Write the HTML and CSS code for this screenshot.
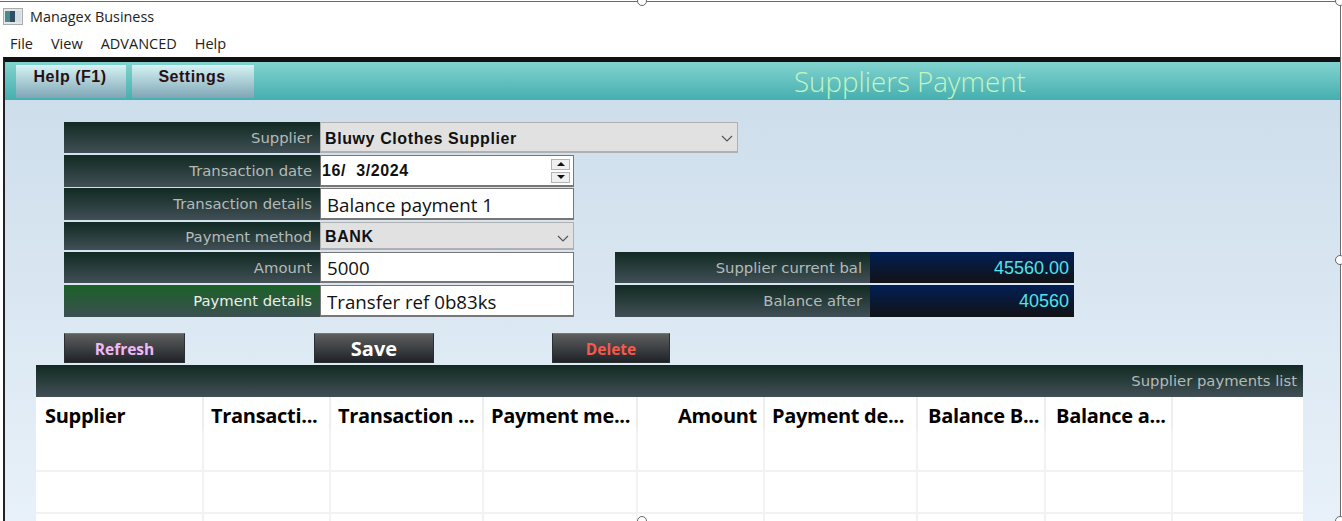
FILE: index.html
```html
<!DOCTYPE html>
<html lang="en">
<head>
    <meta charset="UTF-8">
    <meta name="viewport" content="width=device-width, initial-scale=1.0">
    <title>Managex Business</title>
    <link rel="stylesheet" href="styles.css">
</head>
<body>
    <div class="frame">
        <div class="titlebar">
            <svg class="app-icon" width="20" height="17" viewBox="0 0 20 17">
                <rect x="0.5" y="0.5" width="19" height="16" fill="#e4e6e8" stroke="#a9acae"/>
                <rect x="2" y="3" width="5" height="11" fill="#4a8a8c"/>
                <rect x="7" y="3" width="5" height="11" fill="#2f4f66"/>
                <rect x="12" y="3" width="6" height="11" fill="#d5dde3"/>
            </svg>
            <span>Managex Business</span>
        </div>
        <nav class="menubar">
            <span>File</span>
            <span>View</span>
            <span>ADVANCED</span>
            <span>Help</span>
        </nav>
        <div class="window">
            <header class="topbar">
                <div class="topbar-btns">
                    <button class="top-btn" type="button">Help (F1)</button>
                    <button class="top-btn" type="button">Settings</button>
                </div>
                <h1>Suppliers Payment</h1>
            </header>
            <main class="content">
                <div class="form-area">
                    <form class="form">
                        <div class="row row-h31">
                            <label class="lbl">Supplier</label>
                            <div class="select-wrap wide">
                                <select class="select"><option>Bluwy Clothes Supplier</option></select>
                                <svg class="chev" width="12" height="7" viewBox="0 0 12 7"><path d="M1 1l5 5 5-5" fill="none" stroke="#555" stroke-width="1.2"/></svg>
                            </div>
                        </div>
                        <div class="row row-h32">
                            <label class="lbl">Transaction date</label>
                            <div class="date-box">
                                <span class="date-val">16/ &nbsp;3/2024</span>
                                <div class="spin">
                                    <span class="spin-btn"><i class="arr-up"></i></span>
                                    <span class="spin-btn"><i class="arr-down"></i></span>
                                </div>
                            </div>
                        </div>
                        <div class="row row-h32 row-tight">
                            <label class="lbl">Transaction details</label>
                            <input class="field" type="text" value="Balance payment 1">
                        </div>
                        <div class="row row-h28">
                            <label class="lbl">Payment method</label>
                            <div class="select-wrap">
                                <select class="select"><option>BANK</option></select>
                                <svg class="chev" width="12" height="7" viewBox="0 0 12 7"><path d="M1 1l5 5 5-5" fill="none" stroke="#555" stroke-width="1.2"/></svg>
                            </div>
                        </div>
                        <div class="row row-h31">
                            <label class="lbl">Amount</label>
                            <input class="field" type="text" value="5000">
                        </div>
                        <div class="row row-h32">
                            <label class="lbl lbl-active">Payment details</label>
                            <input class="field" type="text" value="Transfer ref 0b83ks">
                        </div>
                    </form>
                    <div class="balances">
                        <div class="row row-h31">
                            <label class="lbl">Supplier current bal</label>
                            <output class="val">45560.00</output>
                        </div>
                        <div class="row row-h32">
                            <label class="lbl">Balance after</label>
                            <output class="val">40560</output>
                        </div>
                    </div>
                </div>
                <div class="actions">
                    <button class="act act-refresh" type="button">Refresh</button>
                    <button class="act act-save" type="button">Save</button>
                    <button class="act act-delete" type="button">Delete</button>
                </div>
                <section class="list">
                    <div class="list-title">Supplier payments list</div>
                    <table class="grid">
                        <thead>
                            <tr>
                                <th>Supplier</th>
                                <th>Transacti...</th>
                                <th>Transaction ...</th>
                                <th>Payment me...</th>
                                <th class="num">Amount</th>
                                <th>Payment de...</th>
                                <th class="pad-b">Balance B...</th>
                                <th class="pad-b">Balance a...</th>
                                <th></th>
                            </tr>
                        </thead>
                        <tbody>
                            <tr><td></td><td></td><td></td><td></td><td></td><td></td><td></td><td></td><td></td></tr>
                            <tr><td></td><td></td><td></td><td></td><td></td><td></td><td></td><td></td><td></td></tr>
                            <tr><td></td><td></td><td></td><td></td><td></td><td></td><td></td><td></td><td></td></tr>
                        </tbody>
                    </table>
                </section>
            </main>
        </div>
        <span class="handle h-top"></span>
        <span class="handle h-corner"></span>
        <span class="handle h-right"></span>
        <span class="handle h-bottom"></span>
        <span class="handle h-corner2"></span>
    </div>
</body>
</html>
```

FILE: styles.css
```css
html, body {
    margin: 0;
    height: 521px;
    overflow: hidden;
    background: #fff;
}
.frame {
    position: relative;
    width: 1341px;
    height: 520px;
    box-sizing: border-box;
    border-top: 1px solid #6a6a6a;
    margin-top: 1px;
    border-right: 1px solid #6a6a6a;
    display: flex;
    flex-direction: column;
    font-family: "Open Sans", sans-serif;
}
.titlebar {
    height: 29px;
    flex: none;
    display: flex;
    align-items: center;
    gap: 7px;
    padding: 0 0 1px 3px;
    box-sizing: border-box;
    font-size: 14.4px;
    color: #222;
}
.menubar {
    height: 26px;
    flex: none;
    box-sizing: border-box;
    display: flex;
    align-items: center;
    gap: 18px;
    padding: 0 0 2px 10px;
    font-size: 14.5px;
    color: #222;
}
.window {
    flex: 1;
    margin-left: 3px;
    border-top: 5px solid #111;
    border-left: 2px solid #222;
    display: flex;
    flex-direction: column;
    background: linear-gradient(#cbdcea, #e8f1f9);
    min-height: 0;
    overflow: hidden;
}
.topbar {
    height: 38px;
    flex: none;
    display: flex;
    background: linear-gradient(#82d3cf, #45afaf);
}
.topbar-btns {
    display: flex;
    gap: 6px;
    padding: 3px 0 0 11px;
}
.top-btn {
    height: 33px;
    border: 0;
    padding: 0 2px 10px 0;
    background: linear-gradient(#d6f3f4, #7fa6b6);
    font: bold 16px "Liberation Sans", sans-serif;
    letter-spacing: 0.5px;
    color: #2a0f12;
}
.top-btn:nth-child(1) { width: 110px; }
.top-btn:nth-child(2) { width: 122px; }
.topbar h1 {
    margin: 0 0 0 540px;
    font-size: 27.7px;
    line-height: 38px;
    font-weight: 300;
    color: #c3f5c0;
    white-space: nowrap;
}
.content {
    flex: 1;
    padding: 22px 0 0 31px;
}
.form-area {
    display: flex;
    align-items: flex-end;
    padding-left: 28px;
}
.form {
    width: 674px;
    display: flex;
    flex-direction: column;
    gap: 2px;
}
.balances {
    width: 459px;
    margin-left: -123px;
    display: flex;
    flex-direction: column;
    gap: 2px;
}
.row {
    display: flex;
}
.row-h28 { height: 28px; }
.row-h31 { height: 31px; }
.row-h32 { height: 32px; }
.row-tight { margin-top: -1px; }
.lbl {
    width: 256px;
    flex: none;
    box-sizing: border-box;
    padding-right: 8px;
    text-align: right;
    font: 14.8px/31px "DejaVu Sans", sans-serif;
    color: #b4bab8;
    background: linear-gradient(#112a22, #414f56);
}
.row-h28 .lbl { line-height: 29px; }
.lbl-active {
    color: #e8efe9;
    background: linear-gradient(#1b6128, #3b4f50);
}
.field, .date-box {
    width: 254px;
    height: 100%;
    box-sizing: border-box;
    border: 1px solid #777;
    border-bottom-width: 2px;
    background: #fff;
    margin: 0;
}
.field {
    padding: 1px 6px 0;
    font: 18.7px "Open Sans", sans-serif;
    color: #111;
    outline: none;
}
.date-box {
    display: flex;
    align-items: center;
    justify-content: space-between;
    padding-left: 1px;
}
.date-val {
    padding-top: 1px;
    font: bold 16px "Liberation Sans", sans-serif;
    letter-spacing: 0.6px;
    color: #111;
}
.spin {
    display: flex;
    flex-direction: column;
    gap: 2px;
    margin-right: 3px;
}
.spin-btn {
    width: 19px;
    height: 11px;
    box-sizing: border-box;
    border: 1px solid #b4b4b4;
    background: #f0f0f0;
    display: flex;
    align-items: center;
    justify-content: center;
}
.arr-up, .arr-down {
    width: 0;
    height: 0;
    border-left: 4px solid transparent;
    border-right: 4px solid transparent;
}
.arr-up { border-bottom: 4px solid #111; }
.arr-down { border-top: 4px solid #111; }
.select-wrap {
    position: relative;
    width: 254px;
    height: 100%;
}
.select-wrap.wide { width: 419px; }
.select {
    appearance: none;
    width: 100%;
    height: 100%;
    box-sizing: border-box;
    border: 1px solid #b0b0b0;
    border-bottom-width: 2px;
    border-radius: 0;
    background: #e1e1e1;
    padding: 2px 4px 0;
    font: bold 16px "Liberation Sans", sans-serif;
    letter-spacing: 0.6px;
    color: #111;
}
.chev {
    position: absolute;
    right: 5px;
    top: 13px;
}
.val {
    width: 204px;
    box-sizing: border-box;
    padding-right: 5px;
    text-align: right;
    font: 18px/32px "Liberation Sans", sans-serif;
    color: #4fe3ea;
    background: linear-gradient(#001f55, #121214);
}
.balances .lbl { width: 255px; }
.actions {
    display: flex;
    margin: 16px 0 2px 28px;
    height: 30px;
}
.act {
    height: 30px;
    border: 1px solid #2a2f34;
    border-top-color: #777;
    padding: 0;
    background: linear-gradient(#5e5e5e, #1e2329);
    font-family: "Open Sans", sans-serif;
    font-weight: 700;
}
.act-refresh { width: 121px; padding-top: 2px; color: #f0b8f4; font-size: 15.5px; }
.act-save { width: 120px; margin-left: 129px; color: #fff; font-size: 20px; }
.act-delete { width: 118px; margin-left: 118px; padding-top: 2px; color: #f65a4a; font-size: 15.5px; }
.list {
    width: 1267px;
}
.list-title {
    height: 32px;
    box-sizing: border-box;
    padding-right: 6px;
    text-align: right;
    font: 14.8px/32px "DejaVu Sans", sans-serif;
    color: #b4bab8;
    background: linear-gradient(#112a22, #414f56);
}
.grid {
    width: 1267px;
    table-layout: fixed;
    border-collapse: separate;
    border-spacing: 0;
    background: #fff;
}
.grid th {
    height: 33px;
    box-sizing: border-box;
    padding: 5px 8px 0 9px;
    font-size: 20px;
    line-height: 28px;
    letter-spacing: -0.3px;
    font-weight: 700;
    text-align: left;
    color: #000;
    white-space: nowrap;
    box-shadow: inset -2px 0 0 #eee;
}
.grid th:nth-child(n+2) { padding-left: 7px; }
.grid th:last-child { box-shadow: none; }
.grid th.num { text-align: right; }
.grid th.pad-b { padding-left: 10px; }
.grid th:nth-child(1) { width: 168px; }
.grid th:nth-child(2) { width: 127px; }
.grid th:nth-child(3) { width: 153px; }
.grid th:nth-child(4) { width: 154px; }
.grid th:nth-child(5) { width: 127px; }
.grid th:nth-child(6) { width: 153px; }
.grid th:nth-child(7) { width: 128px; }
.grid th:nth-child(8) { width: 127px; }
.grid td {
    height: 42px;
    box-sizing: border-box;
    padding: 0;
    border-right: 2px solid #f2f2f2;
    border-bottom: 2px solid #f2f2f2;
}
.grid td:last-child { border-right: 0; }
.handle {
    position: absolute;
    width: 10px;
    height: 10px;
    box-sizing: border-box;
    border: 1.5px solid #666;
    border-radius: 50%;
    background: #fff;
}
.h-top { left: 637px; top: -6px; }
.h-corner { left: 1335px; top: -6px; }
.h-right { left: 1335px; top: 253px; }
.h-bottom { left: 637px; top: 514px; }
.h-corner2 { left: 1335px; top: 514px; }
```
